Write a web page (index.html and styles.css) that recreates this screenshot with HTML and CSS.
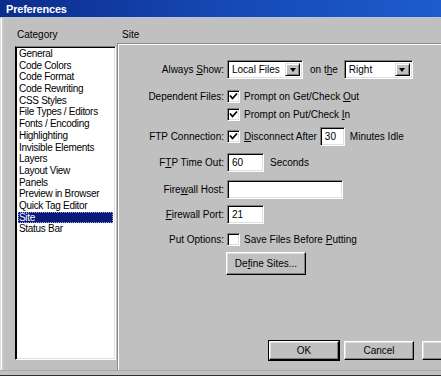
FILE: index.html
```html
<!DOCTYPE html>
<html>
<head>
<meta charset="utf-8">
<title>Preferences</title>
<link rel="stylesheet" href="styles.css">
</head>
<body>
<div class="window">
  <div class="titlebar"><span class="title">Preferences</span></div>
  <div class="main">
    <div class="left">
      <div class="caption">Category</div>
      <ul class="listbox">
        <li>General</li>
        <li>Code Colors</li>
        <li>Code Format</li>
        <li>Code Rewriting</li>
        <li>CSS Styles</li>
        <li>File Types / Editors</li>
        <li>Fonts / Encoding</li>
        <li>Highlighting</li>
        <li>Invisible Elements</li>
        <li>Layers</li>
        <li>Layout View</li>
        <li>Panels</li>
        <li>Preview in Browser</li>
        <li>Quick Tag Editor</li>
        <li class="sel"><span class="focus">Site</span></li>
        <li>Status Bar</li>
      </ul>
    </div>
    <div class="right">
      <div class="caption site">Site</div>
      <div class="panel">
        <div class="row r-show">
          <span class="lbl">Always <u>S</u>how:</span>
          <div class="field select w-local"><span class="val">Local Files</span><span class="drop"><span class="tri"></span></span></div>
          <span class="txt onthe">on t<u>h</u>e</span>
          <div class="field select w-right"><span class="val">Right</span><span class="drop"><span class="tri"></span></span></div>
        </div>
        <div class="row r-dep">
          <span class="lbl">Dependent Files:</span>
          <span class="check"><svg width="9" height="9" viewBox="0 0 9 9"><path d="M1 3.5 L3.5 6.5 L8 1.5" fill="none" stroke="#000" stroke-width="1.8"/></svg></span>
          <span class="txt">Prompt on Get/Check <u>O</u>ut</span>
        </div>
        <div class="row r-dep2">
          <span class="lbl"></span>
          <span class="check"><svg width="9" height="9" viewBox="0 0 9 9"><path d="M1 3.5 L3.5 6.5 L8 1.5" fill="none" stroke="#000" stroke-width="1.8"/></svg></span>
          <span class="txt">Prompt on Put/Check <u>I</u>n</span>
        </div>
        <div class="row r-ftp">
          <span class="lbl">FTP Connection:</span>
          <span class="check"><svg width="9" height="9" viewBox="0 0 9 9"><path d="M1 3.5 L3.5 6.5 L8 1.5" fill="none" stroke="#000" stroke-width="1.8"/></svg></span>
          <span class="txt"><u>D</u>isconnect After</span>
          <div class="field input w-min"><span class="val">30</span></div>
          <span class="txt">Minutes Idle</span>
        </div>
        <div class="row r-time">
          <span class="lbl">F<u>T</u>P Time Out:</span>
          <div class="field input w-short"><span class="val">60</span></div>
          <span class="txt secs">Seconds</span>
        </div>
        <div class="row r-host">
          <span class="lbl">Fire<u>w</u>all Host:</span>
          <div class="field input w-host"><span class="val"></span></div>
        </div>
        <div class="row r-port">
          <span class="lbl"><u>F</u>irewall Port:</span>
          <div class="field input w-short"><span class="val">21</span></div>
        </div>
        <div class="row r-put">
          <span class="lbl">Put Options:</span>
          <span class="check"></span>
          <span class="txt">Save Files Before <u>P</u>utting</span>
        </div>
        <div class="row r-define">
          <span class="lbl"></span>
          <button class="btn define">De<u>f</u>ine Sites...</button>
        </div>
        <div class="footer">
          <button class="btn dlg default">OK</button>
          <button class="btn dlg cancel">Cancel</button>
          <button class="btn dlg help"></button>
        </div>
      </div>
    </div>
  </div>
  <div class="frame-bottom"></div>
</div>
</body>
</html>
```

FILE: styles.css
```css
* { box-sizing: border-box; }
html, body { margin: 0; padding: 0; background: #c0c0c0; }
.window {
  width: 441px;
  height: 376px;
  overflow: hidden;
  background: #c0c0c0;
  font-family: "Liberation Sans", Arial, sans-serif;
  font-size: 10px;
  color: #000;
  display: flex;
  flex-direction: column;
}
u { text-decoration: underline; text-underline-offset: 1px; }
.titlebar {
  height: 18px;
  flex: none;
  background: linear-gradient(90deg, #0c2c8c 0%, #1548b4 50%, #1d5ccc 100%);
  display: flex;
  align-items: center;
  padding-left: 6px;
  border-bottom: 1px solid #b8c4dc;
}
.title { color: #fff; font-weight: bold; font-size: 11px; letter-spacing: -0.2px; }
.main {
  flex: 1;
  display: flex;
  border-left: 1px solid #dfdfdf;
  box-shadow: inset 1px 0 0 #ffffff, inset 3px 0 0 #c8c8c8;
}
.left {
  width: 116px;
  flex: none;
  padding: 11px 0 0 14px;
  display: flex;
  flex-direction: column;
}
.caption { height: 12px; line-height: 12px; padding-left: 2px; }
.listbox {
  margin: 5px 0 0 0;
  padding: 1px 2px 0 2px;
  list-style: none;
  width: 101px;
  height: 314px;
  background: #fff;
  border-top: 1px solid #808080;
  border-left: 1px solid #000;
  border-right: 1px solid #fff;
  border-bottom: 1px solid #fff;
  box-shadow: inset 1px 1px 0 #000, inset -1px -1px 0 #dfdfdf;
  letter-spacing: -0.3px;
}
.listbox li {
  height: 11.7px;
  line-height: 11.7px;
  padding-left: 1px;
  white-space: nowrap;
}
.listbox li.sel {
  background: #0a1a7a;
  color: #fff;
  outline: 1px dotted #9aa0c8;
  outline-offset: -1px;
}
.right {
  flex: 1;
  display: flex;
  flex-direction: column;
  padding-top: 11px;
}
.caption.site { padding-left: 5px; }
.panel {
  flex: 1;
  margin-top: 2px;
  border-top: 1px solid #8c8c8c;
  border-left: 1px solid #8c8c8c;
  box-shadow: inset 1px 1px 0 #ffffff;
  padding-top: 16px;
  display: flex;
  flex-direction: column;
}
.row { display: flex; align-items: center; flex: none; }
.lbl {
  width: 109px;
  flex: none;
  text-align: right;
  padding-right: 3px;
  white-space: nowrap;
}
.txt { white-space: nowrap; margin-left: 4px; }
.field {
  background: #fff;
  border-top: 1px solid #808080;
  border-left: 1px solid #808080;
  border-right: 1px solid #fff;
  border-bottom: 1px solid #fff;
  box-shadow: inset 1px 1px 0 #000, inset -1px -1px 0 #dfdfdf;
  display: flex;
  align-items: center;
  position: relative;
}
.field .val { padding-left: 4px; }
.select { height: 19px; }
.w-local { width: 76px; }
.w-right { width: 69px; }
.onthe { margin: 0 6px 0 7px; }
.drop {
  position: absolute;
  right: 2px;
  top: 2px;
  width: 15px;
  height: 13px;
  background: #c0c0c0;
  border-top: 1px solid #dfdfdf;
  border-left: 1px solid #dfdfdf;
  border-right: 1px solid #000;
  border-bottom: 1px solid #000;
  box-shadow: inset 1px 1px 0 #fff, inset -1px -1px 0 #808080;
  display: flex;
  align-items: center;
  justify-content: center;
}
.tri {
  width: 0; height: 0;
  border-left: 3.5px solid transparent;
  border-right: 3.5px solid transparent;
  border-top: 4px solid #000;
}
.check {
  width: 13px;
  height: 13px;
  flex: none;
  background: #fff;
  border-top: 1px solid #808080;
  border-left: 1px solid #808080;
  border-right: 1px solid #fff;
  border-bottom: 1px solid #fff;
  box-shadow: inset 1px 1px 0 #000, inset -1px -1px 0 #dfdfdf;
  display: flex;
  align-items: center;
  justify-content: center;
}
.check svg { display: block; }
.input { height: 19px; }
.w-min { width: 25px; margin-left: 3px; }
.w-min + .txt { margin-left: 5px; }
.w-short { width: 37px; }
.w-host { width: 116px; }
.secs { margin-left: 6px; }
.r-show { height: 19px; }
.r-dep { height: 14px; margin-top: 10px; }
.r-dep2 { height: 14px; margin-top: 4px; }
.r-ftp { height: 19px; margin-top: 6px; }
.r-time { height: 19px; margin-top: 7px; }
.r-host { height: 19px; margin-top: 8px; }
.r-port { height: 19px; margin-top: 6px; }
.r-put { height: 14px; margin-top: 8px; }
.r-define { height: 23px; margin-top: 6px; }
.btn {
  font-family: "Liberation Sans", Arial, sans-serif;
  font-size: 10px;
  color: #000;
  background: #c0c0c0;
  border-top: 1px solid #fff;
  border-left: 1px solid #fff;
  border-right: 1px solid #000;
  border-bottom: 1px solid #000;
  box-shadow: inset -1px -1px 0 #808080, inset 1px 1px 0 #dfdfdf;
  padding: 0;
  margin: 0;
}
.define { width: 80px; height: 23px; margin-left: -1px; }
.footer {
  margin-top: auto;
  margin-bottom: 10px;
  display: flex;
  padding-left: 151px;
}
.dlg { width: 70px; height: 19px; flex: none; }
.default { outline: 1px solid #000; }
.cancel { margin-left: 5px; }
.help { margin-left: 8px; }
.frame-bottom {
  height: 6px;
  flex: none;
  border-top: 1px solid #a8a8a8;
  border-bottom: 1px solid #303030;
}
```
